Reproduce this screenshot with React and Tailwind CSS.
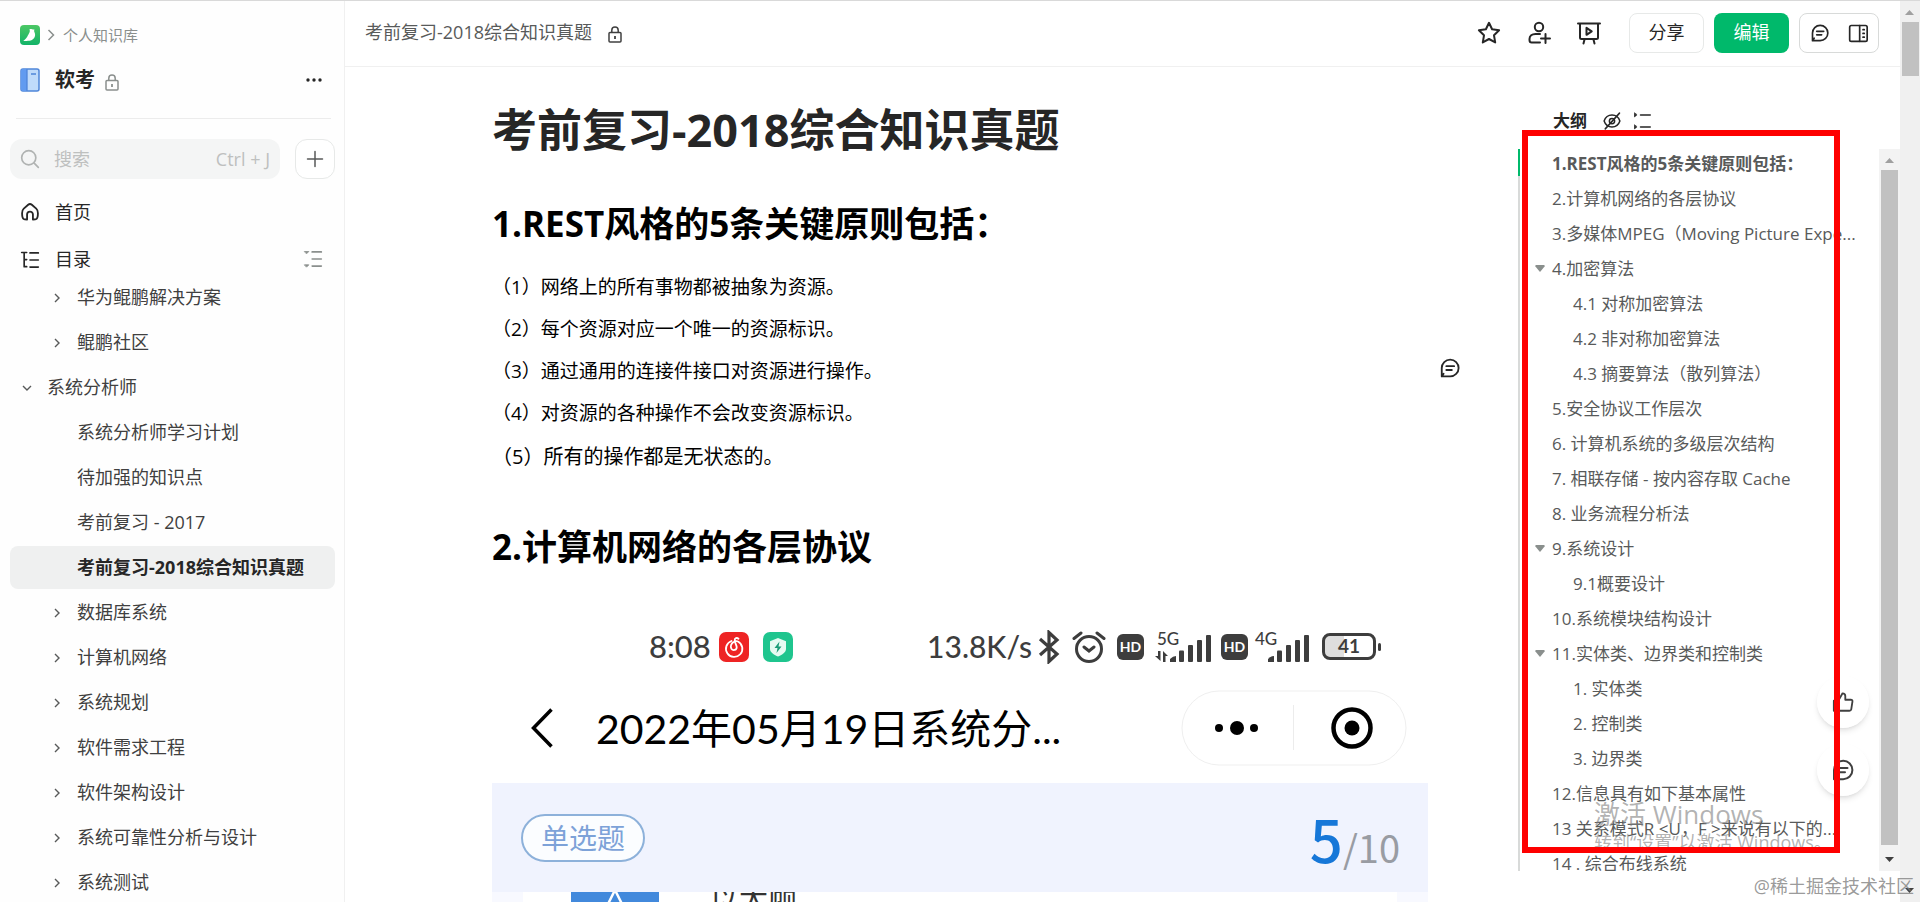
import clsx from 'clsx';

const tree = [
  { title: '华为鲲鹏解决方案', level: 1, arrow: 'right' },
  { title: '鲲鹏社区', level: 1, arrow: 'right' },
  { title: '系统分析师', level: 0, arrow: 'down' },
  { title: '系统分析师学习计划', level: 1 },
  { title: '待加强的知识点', level: 1 },
  { title: '考前复习 - 2017', level: 1 },
  { title: '考前复习-2018综合知识真题', level: 1, active: true },
  { title: '数据库系统', level: 1, arrow: 'right' },
  { title: '计算机网络', level: 1, arrow: 'right' },
  { title: '系统规划', level: 1, arrow: 'right' },
  { title: '软件需求工程', level: 1, arrow: 'right' },
  { title: '软件架构设计', level: 1, arrow: 'right' },
  { title: '系统可靠性分析与设计', level: 1, arrow: 'right' },
  { title: '系统测试', level: 1, arrow: 'right' },
];

const outline = [
  { title: '1.REST风格的5条关键原则包括：', active: true },
  { title: '2.计算机网络的各层协议' },
  { title: '3.多媒体MPEG（Moving Picture Expe...' },
  { title: '4.加密算法', open: true },
  { title: '4.1 对称加密算法', sub: true },
  { title: '4.2 非对称加密算法', sub: true },
  { title: '4.3 摘要算法（散列算法）', sub: true },
  { title: '5.安全协议工作层次' },
  { title: '6. 计算机系统的多级层次结构' },
  { title: '7. 相联存储 - 按内容存取 Cache' },
  { title: '8. 业务流程分析法' },
  { title: '9.系统设计', open: true },
  { title: '9.1概要设计', sub: true },
  { title: '10.系统模块结构设计' },
  { title: '11.实体类、边界类和控制类', open: true },
  { title: '1. 实体类', sub: true },
  { title: '2. 控制类', sub: true },
  { title: '3. 边界类', sub: true },
  { title: '12.信息具有如下基本属性' },
  { title: '13 关系模式R <U，F >来说有以下的...' },
  { title: '14 . 综合布线系统' },
];

const principles = [
  '（1）网络上的所有事物都被抽象为资源。',
  '（2）每个资源对应一个唯一的资源标识。',
  '（3）通过通用的连接件接口对资源进行操作。',
  '（4）对资源的各种操作不会改变资源标识。',
];

const Icon = ({ className, size = 24, width = 2, children }) => (
  <svg
    className={clsx('shrink-0', className)}
    width={size}
    height={size}
    viewBox="0 0 24 24"
    fill="none"
    stroke="currentColor"
    strokeWidth={width}
    strokeLinecap="round"
    strokeLinejoin="round"
    aria-hidden="true"
  >
    {children}
  </svg>
);

const LockIcon = ({ className }) => (
  <svg className={className} width="14" height="17" viewBox="0 0 14 17" fill="none" stroke="currentColor" aria-hidden="true">
    <rect x="1" y="6.5" width="12" height="9.5" rx="1" strokeWidth="1.5" />
    <path d="M3.8 6.5V4.2a3.2 3.2 0 0 1 6.4 0v2.3" strokeWidth="1.5" />
    <path d="M7 10v3" strokeWidth="1.8" />
  </svg>
);

const CommentIcon = ({ size }) => (
  <Icon size={size}>
    <path d="M3 21.2V12a9.2 9.2 0 1 1 9.2 9.2H3l2-3" />
    <path d="M8 10h8.5M8 14.2h6" />
  </Icon>
);

const Chevron = ({ down }) => (
  <svg width="10" height="10" viewBox="0 0 10 10" fill="none" stroke="#585a5a" strokeWidth="1.4" aria-hidden="true">
    <path d={down ? 'M1 3l4 4 4-4' : 'M3 1l4 4-4 4'} />
  </svg>
);

const Scrollbar = ({ className, thumb }) => (
  <div className={clsx('flex shrink-0 flex-col items-center', className)} aria-hidden="true">
    <svg className="shrink-0" width="20" height="21" viewBox="0 0 20 21">
      <path d="M5 14l4.5-5 4.5 5z" fill="#a0a0a0" />
    </svg>
    <div className={clsx('w-[17px] bg-[#c1c1c1]', thumb)} />
    <svg className="mt-auto shrink-0" width="20" height="26" viewBox="0 0 20 26">
      <path d="M5 12l4.5 5 4.5-5z" fill="#404040" />
    </svg>
  </div>
);

const Sidebar = () => (
  <aside className="flex w-[345px] shrink-0 flex-col border-r border-[#f0f0f0] bg-[#fefefe] *:shrink-0">
    <div className="mt-[23px] flex h-[22px] items-center pl-5">
      <svg width="20" height="20" viewBox="0 0 20 20" aria-hidden="true">
        <defs>
          <linearGradient id="logo" x1="0" y1="0" x2="0" y2="1">
            <stop offset="0" stopColor="#4cc764" />
            <stop offset="1" stopColor="#12b368" />
          </linearGradient>
        </defs>
        <rect width="20" height="20" rx="4" fill="url(#logo)" />
        <path d="M9.500 4.200c1.600-.8 3 .6 5 .3-.6 1.200-.4 2 .3 3.500 1.300 3.800-1.500 7.300-5.500 7.800-2.500.3-4.500 0-6 .2 1.500-1.500 3-2.500 4.200-4.800C8.800 8.500 10.500 7 9.500 4.200z" fill="#fff" />
      </svg>
      <svg className="ml-[7px]" width="8" height="12" viewBox="0 0 8 12" fill="none" stroke="#8a8f8d" strokeWidth="1.5" aria-hidden="true">
        <path d="M1.500 1l5 5-5 5" />
      </svg>
      <a href="#" className="ml-2 text-[15px] text-[#8a8f8d]">个人知识库</a>
    </div>
    <div className="mt-5 flex h-[28px] items-center pl-5 pr-[18px]">
      <svg width="20" height="24" viewBox="0 0 20 24" aria-hidden="true">
        <rect x="1" y="1" width="18" height="22" rx="2" fill="#bfdbfb" stroke="#4f86d9" strokeWidth="1.500" />
        <path d="M1 3a2 2 0 0 1 2-2h4v22H3a2 2 0 0 1-2-2z" fill="#619bf0" />
        <path d="M7 1v22M11 6h5" stroke="#4f86d9" strokeWidth="1.300" />
      </svg>
      <h2 className="ml-[15px] text-xl font-bold text-[#262626]">软考</h2>
      <LockIcon className="ml-2.5 mt-1 text-[#8a8f8d]" />
      <button className="ml-auto p-1" aria-label="更多">
        <svg width="16" height="4" viewBox="0 0 16 4" fill="#262626" aria-hidden="true">
          <circle cx="2" cy="2" r="1.700" />
          <circle cx="8" cy="2" r="1.700" />
          <circle cx="14" cy="2" r="1.700" />
        </svg>
      </button>
    </div>
    <hr className="mx-[13px] mt-6 ml-4 border-[#ececec]" />
    <div className="mt-5 flex h-10 gap-[15px] pl-[10px] pr-[9px]">
      <label className="flex min-w-0 flex-1 items-center rounded-xl bg-[#f4f5f5] px-[10px] text-[#bec0bf]">
        <Icon size={20} className="text-[#b0b3b2]">
          <circle cx="10.500" cy="10.500" r="8.500" />
          <path d="M17 17l5 5" />
        </Icon>
        <input
          type="search"
          placeholder="搜索"
          aria-label="搜索"
          className="ml-[14px] min-w-0 flex-1 bg-transparent text-[18px] outline-none placeholder:text-[#bec0bf]"
        />
        <span className="whitespace-nowrap text-[18px]">Ctrl + J</span>
      </label>
      <button className="flex w-10 items-center justify-center rounded-xl border border-[#e7e9e8] bg-white text-[#585a5a]" aria-label="新建">
        <Icon size={18}>
          <path d="M12 2v20M2 12h20" />
        </Icon>
      </button>
    </div>
    <a href="#" className="mt-[10px] flex h-[46px] items-center pl-5 text-[18px] text-[#262626]">
      <Icon size={20} width={2.2}>
        <path d="M4.500 20.500C3 19.500 2.500 17 2.500 13.500c0-3 .3-4 2-5.500l5.300-4.700a3.300 3.300 0 0 1 4.400 0L19.500 8c1.700 1.500 2 2.500 2 5.500 0 3.500-.5 6-2 7-.8.500-2.500.500-4 .500v-6a3.500 3.500 0 0 0-7 0v6c-1.500 0-3.200 0-4-.500z" />
      </Icon>
      <span className="ml-[15px]">首页</span>
    </a>
    <div className="flex h-[38px] items-end pl-5 pr-[21px] text-[18px] text-[#262626]">
      <a href="#" className="flex items-center">
        <Icon size={20}>
          <path d="M2 3h6M5 3v17h3M5 11.500h3M12 3.500h10M12 12h10M12 20.500h10" />
        </Icon>
        <span className="ml-[15px]">目录</span>
      </a>
      <button className="mb-1 ml-auto text-[#8a8f8d]" aria-label="折叠目录">
        <Icon size={20}>
          <path d="M11 3.500h11M11 12h11M11 20.500h11" />
          <path d="M2 3h5L4.500 5.500zM2 19h5l-2.500 2.500z" fill="currentColor" strokeWidth="1" />
        </Icon>
      </button>
    </div>
    <nav className="mt-[3px] flex flex-col pl-[10px] pr-[9px]">
      {tree.map((item) => (
        <a
          key={item.title}
          href="#"
          className={clsx(
            'mb-0.5 flex h-[43px] shrink-0 items-center rounded-lg text-[18px]',
            item.level ? 'pl-[42px]' : 'pl-3',
            item.active ? 'bg-[#eff0f0] font-bold text-[#262626]' : 'text-[#404040]'
          )}
        >
          <span className="w-[25px]">{item.arrow && <Chevron down={item.arrow === 'down'} />}</span>
          {item.title}
        </a>
      ))}
    </nav>
  </aside>
);

const Header = () => (
  <header className="flex h-[66px] shrink-0 items-center border-b border-[#f0f0f0] pb-0.5 pl-5 pr-[21px] text-[#262626]">
    <span className="text-[18px] text-[#585a5a]">考前复习-2018综合知识真题</span>
    <LockIcon className="ml-4 mt-1 text-[#404040]" />
    <div className="ml-auto flex items-center">
      <button className="mr-[26px]" aria-label="收藏">
        <Icon>
          <path d="M12 1.800l3.100 6.500 7 1-5.100 5 1.200 7.100L12 18l-6.200 3.400L7 14.300l-5.100-5 7-1z" />
        </Icon>
      </button>
      <button className="mr-[26px]" aria-label="协作">
        <Icon>
          <circle cx="12" cy="6" r="4.200" />
          <path d="M13 13H8.500C5 13 2.500 15 2.500 18v1c0 1.600.7 2.500 2.200 2.500H13M18.500 13v9M14 17.500h9" />
        </Icon>
      </button>
      <button className="mr-7" aria-label="演示">
        <Icon>
          <path d="M1 2.500h22M3 2.500v14c0 1 .5 1.500 1.500 1.500h15c1 0 1.500-.5 1.500-1.500v-14M7.500 18.500L6.500 22.500M16.500 18.500l1 4" />
          <path d="M9.500 6.800v7l5.200-3.500z" />
        </Icon>
      </button>
      <button className="mr-[10px] h-10 w-[75px] rounded-lg border border-[#e7e9e8] text-[18px]">分享</button>
      <button className="mr-[10px] h-10 w-[75px] rounded-lg bg-[#00b96b] text-[18px] text-white">编辑</button>
      <div className="flex h-10 w-20 items-center justify-center gap-[18px] rounded-lg border border-[#d8dad9]">
        <button aria-label="评论">
          <CommentIcon size={20} />
        </button>
        <button aria-label="侧栏">
          <Icon size={20}>
            <rect x="2" y="3" width="21" height="19" rx="2" />
            <path d="M14 3v19M18 8h1.500M18 12.500h1.500M18 17h1.500" />
          </Icon>
        </button>
      </div>
    </div>
  </header>
);

const Signal = ({ label, arrows }) => (
  <span className="relative ml-[5px] h-8 w-[58px] text-[#3d3d3d]">
    <svg className="absolute inset-0" width="58" height="32" viewBox="0 0 58 32" fill="currentColor" aria-hidden="true">
      <path d="M15 31v-3q3-3 6-3v6z" />
      <rect x="24" y="19.500" width="5" height="11.500" rx="1" />
      <rect x="33" y="14" width="5" height="17" rx="1" />
      <rect x="42" y="9" width="5" height="22" rx="1" />
      <rect x="51" y="4" width="5" height="27" rx="1" />
      {arrows && <path d="M3 20h2.500v10L0 25h3zM8 31V20l5 5h-2.500v6z" />}
    </svg>
    <span className="absolute left-0.5 top-0 font-[Lato] text-[17px] leading-4">{label}</span>
  </span>
);

const HdBadge = () => (
  <span className="flex h-[26px] w-[27px] items-center justify-center rounded-md bg-[#3d3d3d] font-[Lato] text-[14px] font-bold text-white">
    HD
  </span>
);

// phone capture embedded in the document
const PhoneShot = () => (
  <figure className="mt-10 flex flex-col">
    <div className="flex h-[75px] items-center pl-[157px] pr-[47px] font-[Lato] text-[30px] font-medium text-[#3d3d3d]">
      <span className="text-[31px]">8:08</span>
      <svg className="ml-2" width="30" height="30" viewBox="0 0 30 30" fill="none" stroke="#fff" strokeWidth="1.800" strokeLinecap="round" aria-hidden="true">
        <rect width="30" height="30" rx="7" fill="#ee2424" stroke="none" />
        <path d="M12.500 9a8.200 8.200 0 1 0 6.500.5c-1-.6-2.500-.6-4 .2-3 1.500-3.900 4.800-2.600 7 1.600 2.400 5.300 1.500 5.300-1.500 0-2-1.700-4-2-6.500-.2-2.700 2.200-3.300 3.800-2" />
      </svg>
      <svg className="ml-[14px]" width="30" height="30" viewBox="0 0 30 30" aria-hidden="true">
        <rect width="30" height="30" rx="7" fill="#1fc58e" />
        <path d="M15 6l8 3.200v7.800c0 3.500-4.500 6-8 7.500-3.500-1.500-8-4-8-7.500V9.200z" fill="#e6fbf2" />
        <path d="M16.500 9.500L11.500 16h3l-1 5 5-6.500h-3z" fill="#1c9d78" />
      </svg>
      <span className="ml-auto">13.8K/s</span>
      <svg className="ml-1.5" width="22" height="34" viewBox="0 0 22 34" fill="none" stroke="#3d3d3d" strokeWidth="3.200" aria-hidden="true">
        <path d="M2 9l17 15-8 7.500v-29l8 7.500L2 25" />
      </svg>
      <svg className="ml-3" width="34" height="34" viewBox="0 0 34 34" fill="none" stroke="#3d3d3d" strokeWidth="3" strokeLinecap="round" aria-hidden="true">
        <circle cx="17" cy="19" r="12.500" />
        <path d="M12 17l5 4 5-4M2 8.500l7-5.500M32 8.500L25 3" />
      </svg>
      <span className="ml-[11px]" />
      <HdBadge />
      <span className="ml-1.5" />
      <Signal label="5G" arrows />
      <span className="ml-2" />
      <HdBadge />
      <Signal label="4G" />
      <span className="ml-[11px] flex h-[27px] w-[54px] items-center justify-center rounded-lg border-[3px] border-[#3d3d3d] bg-linear-to-r from-[#dedede] from-40% to-white to-40% text-[19px] font-bold">
        41
      </span>
      <span className="ml-[2px] h-2 w-[3px] rounded-sm bg-[#3d3d3d]" />
    </div>
    <div className="flex h-[88px] items-center pl-[38px] pr-[21px] text-black">
      <svg width="24" height="40" viewBox="0 0 24 40" fill="none" stroke="currentColor" strokeWidth="3.500" aria-hidden="true">
        <path d="M21.500 1.500L3.500 20l18 18.500" />
      </svg>
      <span className="ml-[42px] whitespace-nowrap font-[Lato,'Noto_Sans_CJK_SC',sans-serif] text-[41px] leading-none">2022年05月19日系统分...</span>
      <svg className="ml-auto" width="226" height="76" viewBox="0 0 226 76" aria-hidden="true">
        <rect x="1" y="1" width="224" height="74" rx="37" fill="#fff" stroke="#efefef" />
        <path d="M112.500 15v45" stroke="#ececec" />
        <circle cx="38" cy="38" r="4" />
        <circle cx="56" cy="38" r="7" />
        <circle cx="73" cy="38" r="4" />
        <circle cx="171" cy="38" r="18.500" fill="none" stroke="#000" strokeWidth="4.500" />
        <circle cx="171" cy="38" r="7.500" />
      </svg>
    </div>
    <div className="mt-[11px] flex h-[109px] items-center justify-between bg-[#f0f3fe] pl-[29px] pr-7">
      <span className="flex h-12 w-[124px] items-center justify-center rounded-full border-2 border-[#8db1da] bg-[#fbfdff] text-[28px] text-[#7da2d8]">
        单选题
      </span>
      <span className="font-['Noto_Sans_CJK_SC',sans-serif] text-[38px] leading-none text-[#999ca3]">
        <span className="text-[58px] font-medium text-[#1677d8]">5</span>/10
      </span>
    </div>
    <div className="bg-[#f8f9ff] px-[31px]">
      <div className="flex h-10 items-start overflow-hidden bg-white pl-12">
        <svg width="88" height="40" viewBox="0 0 88 40" aria-hidden="true">
          <rect width="88" height="40" fill="#4289dc" />
          <path d="M36 14L44 -2l8 16" fill="none" stroke="#fff" strokeWidth="2.500" />
        </svg>
        <span className="-mt-2 ml-[51px] text-[29px] leading-[30px] text-[#333]">以大顾</span>
      </div>
    </div>
  </figure>
);

const Article = () => (
  <article className="relative min-w-0 flex-1 pl-[147px] pr-[90px] pt-[33px] text-black">
    <h1 className="text-[45px] font-bold leading-[60px] text-[#262626]">考前复习-2018综合知识真题</h1>
    <h2 className="mt-[42px] text-[35px] font-bold leading-[44px]">1.REST风格的5条关键原则包括：</h2>
    <div className="mt-5 text-[19px] leading-[42px]">
      {principles.map((text) => (
        <p key={text}>{text}</p>
      ))}
      <p className="text-[20px] leading-[46px]">（5）所有的操作都是无状态的。</p>
    </div>
    <h2 className="mt-[45px] text-[35px] font-bold leading-[44px]">2.计算机网络的各层协议</h2>
    <PhoneShot />
    <button className="absolute right-[57px] top-[290px] text-[#262626]" aria-label="评论">
      <CommentIcon size={22} />
    </button>
  </article>
);

const Outline = () => (
  <aside className="relative flex w-[382px] shrink-0 flex-col pb-[31px]">
    <div className="flex h-[82px] items-center pl-[35px] pt-[26px] text-[#262626]">
      <h3 className="text-[17px] font-bold">大纲</h3>
      <button className="ml-4" aria-label="隐藏大纲">
        <Icon size={18}>
          <path d="M12 4c5 0 9 3.500 10.500 8-1.500 4.500-5.500 8-10.500 8S3 16.500 1.500 12C3 7.500 7 4 12 4z" />
          <circle cx="12" cy="12" r="3.500" />
          <path d="M22 1.500L3 22.500" />
        </Icon>
      </button>
      <button className="ml-3" aria-label="展开大纲">
        <Icon size={18}>
          <path d="M10 4h13M10 20h13" />
          <path d="M2 1.500v5L5 4zM2 17.500v5L5 20z" fill="currentColor" strokeWidth="1" />
        </Icon>
      </button>
    </div>
    <div className="flex min-h-0 flex-1">
      <div className="w-0.5 shrink-0 bg-[#d8dad9]">
        <div className="h-[27px] bg-[#00b96b]" />
      </div>
      <nav className="min-w-0 flex-1 overflow-hidden pl-[15px] -mt-[3px]">
        {outline.map((item) => (
          <a
            key={item.title}
            href="#"
            className={clsx(
              'flex h-[35px] items-center whitespace-nowrap text-[17px] text-[#585a5a]',
              item.sub && 'pl-[21px]',
              item.active && 'font-bold'
            )}
          >
            <span className="w-[17px] shrink-0">
              {item.open && (
                <svg width="10" height="7" viewBox="0 0 10 7" fill="#8a8f8d" aria-hidden="true">
                  <path d="M1 0h8l1 1-5 6-5-6z" />
                </svg>
              )}
            </span>
            {item.title}
          </a>
        ))}
      </nav>
      <Scrollbar className="w-[21px] bg-[#f3f3f3]" thumb="h-[675px]" />
    </div>

    <button className="absolute bottom-[174px] right-[31px] flex size-[52px] items-center justify-center rounded-full bg-white/80 text-[#404040] shadow-md" aria-label="点赞">
      <Icon size={22}>
        <path d="M2 10.500h5l4.500-8c2 0 3 1 3 3v4h6c1.300 0 2 .8 1.800 2l-1.300 8.500c-.2 1-.9 1.500-2 1.500H2z" />
      </Icon>
    </button>
    <button className="absolute bottom-[106px] right-[31px] flex size-[52px] items-center justify-center rounded-full bg-white/80 text-[#404040] shadow-md" aria-label="评论">
      <CommentIcon size={24} />
    </button>

    <div className="pointer-events-none absolute bottom-[48px] left-[76px] whitespace-nowrap text-[#808080]/60">
      <p className="text-[26px] leading-8">激活 Windows</p>
      <p className="text-[18px] leading-6">转到“设置”以激活 Windows。</p>
    </div>
    <div className="pointer-events-none absolute bottom-[49px] left-1 right-[60px] top-[63px] border-[6px] border-[#fe0000]" />
  </aside>
);

const App = () => (
  <div className="relative flex h-screen overflow-hidden border-t border-[#d9d9d9] bg-white font-['Open_Sans','Noto_Sans_CJK_SC',sans-serif]" lang="zh-CN">
    <Sidebar />
    <div className="flex min-w-0 flex-1 flex-col">
      <Header />
      <main className="flex min-h-0 flex-1">
        <Article />
        <Outline />
      </main>
    </div>
    <Scrollbar className="w-5 bg-[#f0f0f0]" thumb="h-[54px]" />
    <div className="pointer-events-none absolute bottom-0.5 right-1.5 text-[18px] leading-7 text-[#808080]/80">@稀土掘金技术社区</div>
  </div>
);

export default App;
